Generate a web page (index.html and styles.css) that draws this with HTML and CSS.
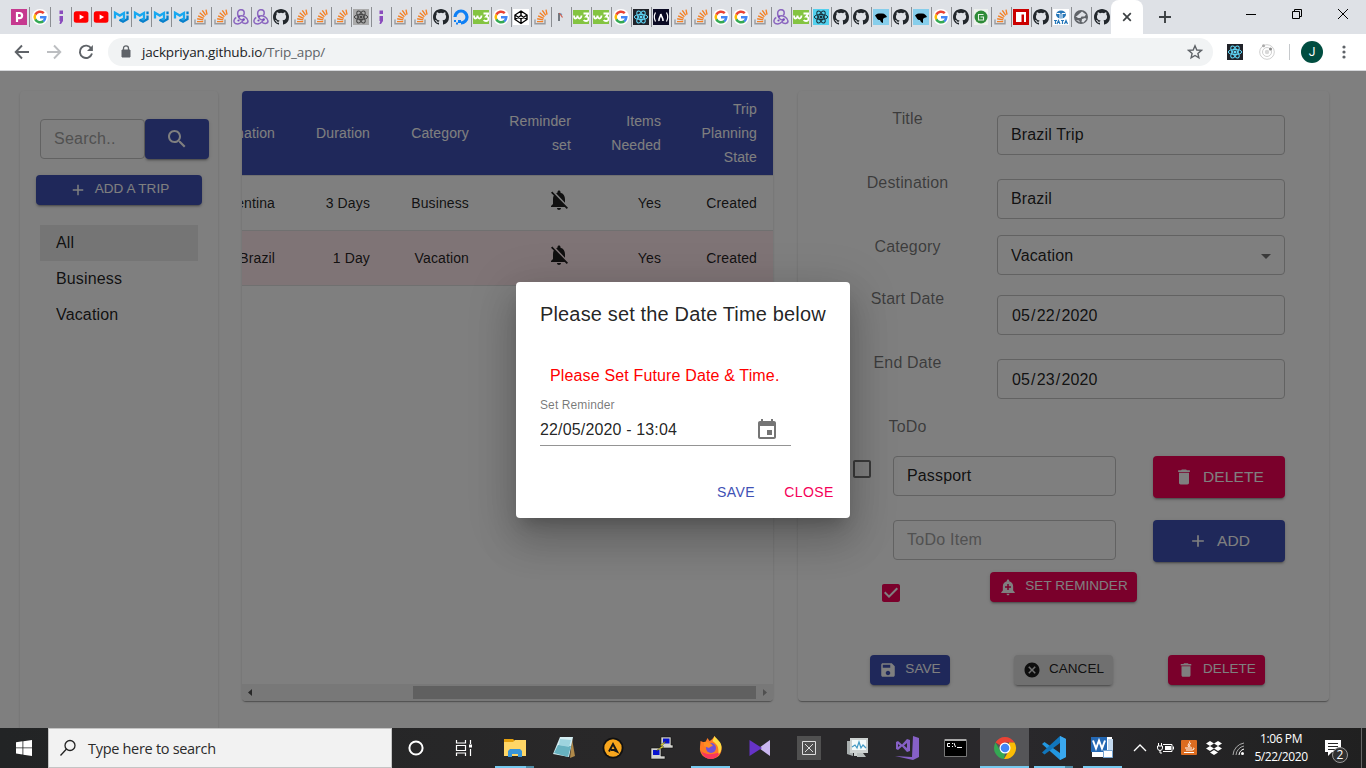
FILE: index.html
```html
<!DOCTYPE html>
<html lang="en">
<head>
<meta charset="utf-8">
<title>Trip App</title>
<link rel="stylesheet" href="styles.css">
</head>
<body>
<svg class="defs" aria-hidden="true">
  <symbol id="pp" viewBox="0 0 16 16"><path fill="#c6398f" d="M0 0h16v16H0z"/><path fill="none" stroke="#fff" stroke-width="2.200" d="M6 13V4h2.500a2.400 2.400 0 0 1 0 5.200H6"/></symbol>
  <symbol id="goo" viewBox="0 0 16 16"><circle cx="8" cy="8" r="8" fill="#fff"/><g fill="none" stroke-width="2.500"><path stroke="#ea4335" d="M3.300 5.600A5.300 5.300 0 0 1 11.800 4.200"/><path stroke="#fbbc05" d="M3.300 5.500a5.300 5.300 0 0 0 0 5"/><path stroke="#34a853" d="M3.300 10.400a5.300 5.300 0 0 0 8.200 1.600"/><path stroke="#4285f4" d="M8 8.200h5.300a5.300 5.300 0 0 1-2 4"/></g></symbol>
  <symbol id="semi" viewBox="0 0 16 16"><path fill="#8a4bbd" d="M6.500 1.500h3.500v3.500H6.500zM6.500 7h3.500v5l-2 3H6.500l.7-3h-.7z"/></symbol>
  <symbol id="yt" viewBox="0 0 16 16"><rect x=".8" y="2.200" width="14.600" height="11.600" rx="2.500" fill="red"/><path fill="#fff" d="M6.600 5.500l4.500 2.500-4.500 2.500z"/></symbol>
  <symbol id="mui" viewBox="0 0 16 16"><path fill="none" stroke="#18a8f0" stroke-width="2.300" d="M2 9.500V3.800l4.800 2.800L11 4v5.500L7 11.500"/><path fill="none" stroke="#0780cc" stroke-width="2.300" d="M6.500 10.700l3.500 2 4.500-2.700V6.500M14.500 2.500v2.700"/></symbol>
  <symbol id="so" viewBox="0 0 16 16"><path fill="none" stroke="#9a9c9f" stroke-width="1.400" d="M2 10.500v4.300h10v-4.300"/><path stroke="#f48024" stroke-width="1.400" d="M4 12.600h6.200M4.200 9.700l6.100 1.200M5.100 6.800l5.600 2.500M6.700 3.800l4.700 3.900M9.300 1.400l3.500 5M13 .6l1 5"/></symbol>
  <symbol id="redux" viewBox="0 0 16 16"><g fill="none" stroke="#8b66bf" stroke-width="1.500"><path d="M10.500 10.800C6 12 4.500 6 4.700 4a3.200 3.200 0 0 1 6.500-.2c.1 1-.4 2-1 2.600"/><path d="M6 7.200C10 5.500 14.800 9 15 12c.1 3-4.300 3-5.900 1.200"/><path d="M10.600 10.500C9 14.500 5 15.500 2.500 14.500c-2.700-1.200-1.500-5 .8-6"/></g><g fill="#764abc"><circle cx="10.700" cy="10.500" r="1.200"/><circle cx="6" cy="7.500" r="1.100"/><circle cx="5.500" cy="11.500" r="1.100"/></g></symbol>
  <symbol id="gh" viewBox="0 0 16 16"><path fill="#22272c" d="M8 0C3.580 0 0 3.580 0 8c0 3.540 2.290 6.530 5.470 7.590.4.070.55-.17.55-.38 0-.19-.01-.82-.01-1.490-2.010.37-2.530-.49-2.690-.94-.09-.23-.48-.94-.82-1.130-.28-.15-.68-.52-.01-.53.63-.01 1.080.58 1.230.82.72 1.210 1.870.87 2.330.66.07-.52.28-.87.51-1.070-1.780-.2-3.640-.89-3.640-3.950 0-.87.31-1.590.82-2.150-.08-.2-.36-1.020.08-2.120 0 0 .67-.21 2.200.82a7.600 7.600 0 0 1 4 0c1.530-1.040 2.200-.82 2.200-.82.44 1.100.16 1.920.08 2.120.51.56.82 1.270.82 2.150 0 3.070-1.870 3.750-3.650 3.950.29.25.54.73.54 1.480 0 1.070-.01 1.930-.01 2.200 0 .21.15.46.55.38A8 8 0 0 0 16 8c0-4.420-3.580-8-8-8z"/></symbol>
  <symbol id="react" viewBox="0 0 16 16"><g fill="none" stroke="currentColor"><ellipse cx="8" cy="8" rx="6.700" ry="2.600"/><ellipse cx="8" cy="8" rx="6.700" ry="2.600" transform="rotate(60 8 8)"/><ellipse cx="8" cy="8" rx="6.700" ry="2.600" transform="rotate(120 8 8)"/></g><circle cx="8" cy="8" r="1.500" fill="currentColor"/></symbol>
  <symbol id="ocean" viewBox="0 0 16 16"><path fill="none" stroke="#0f80f5" stroke-width="3.200" d="M2 8a6 6 0 1 1 6 6"/><path fill="#0f80f5" d="M5 11h3v3H5zM3 13.500h2v2H3zM1 11h2v2H1z"/></symbol>
  <symbol id="w3" viewBox="0 0 16 16"><path fill="#84c441" d="M0 1h16v14H0z"/><path fill="none" stroke="#fff" stroke-width="1.800" d="M1 6.500c0 4 3 4 3.500 0 .500 4 3.500 4 4 0M10.500 4.500h5L13 7.500c3 0 3.500 4.500 0 4.500-1.300 0-2-.5-2.300-1"/></symbol>
  <symbol id="pen" viewBox="0 0 16 16"><path fill="#fff" d="M0 0h16v16H0z"/><path fill="none" stroke="#000" stroke-width="1.400" d="M8 2l6 4v4.500L8 14.500 2 10.500V6zM8 2v4.500M8 10v4.500M2 6l6 4 6-4M2 10.500l6-4 6 4"/></symbol>
  <symbol id="n" viewBox="0 0 16 16"><path stroke="#39424b" stroke-width="1.300" d="M6 4v8"/><path stroke="#d05a4a" stroke-width="1.200" d="M6.500 4l3 4.500"/><path stroke="#6a93b8" d="M7.500 4l1.500 2"/></symbol>
  <symbol id="fcc" viewBox="0 0 16 16"><path fill="#0a0a23" d="M0 0h16v16H0z"/><path fill="none" stroke="#fff" stroke-width="1.200" d="M2.500 3.500c-1.600 3-1.600 6 0 9M13.500 3.500c1.600 3 1.600 6 0 9"/><path fill="none" stroke="#fff" stroke-width="1.600" d="M6 12c-.5-3 1.500-3.500 1.800-7 .7 3.500 2.500 3.500 2.200 7"/></symbol>
  <symbol id="bird" viewBox="0 0 16 16"><path fill="#87ceeb" d="M0 0h16v16H0z"/><path fill="#000" d="M2 6.500C4 4 7 4.500 9 4.500c3 0 4 2 5 3.500-2 .5-3 1-4 2v4c-2-.5-2.700-2-3-3-3 0-3-2-5-4.500z"/></symbol>
  <symbol id="green" viewBox="0 0 16 16"><path fill="#eef2ee" d="M1 0h14v16H1z"/><circle cx="8" cy="8" r="6.500" fill="#2e8b38"/><path fill="none" stroke="#e5f3e5" stroke-width="1.100" d="M10.500 5.500h-5v5.500h5V8H7.500"/></symbol>
  <symbol id="npm" viewBox="0 0 16 16"><path fill="#cb0000" d="M0 0h16v16H0z"/><path fill="#fff" d="M3 3h10v10h-2V5.500H8.500V13H3z"/></symbol>
  <symbol id="tata" viewBox="0 0 16 16"><path fill="#fff" d="M0 0h16v16H0z"/><ellipse cx="8" cy="5.500" rx="5" ry="4" fill="#2677b9"/><path fill="none" stroke="#fff" d="M3.500 4.500h3.500v5M12.500 4.500H9v5"/><path fill="none" stroke="#2677b9" stroke-width="1.200" d="M1 11.500h3M2.500 11v4M4 15l1.500-3.500L7 15M8 11.500h3M9.500 11v4M11.500 15l1.500-3.500 1.500 3.500"/></symbol>
  <symbol id="globe" viewBox="0 0 16 16"><circle cx="8" cy="8" r="7" fill="#5f6368"/><path fill="#dee1e6" d="M9 2.500l4 3-1.500 2-3 0-1 1.500H5L2.500 7C4 7.500 5 6 6 5zM9 10l3-1 1.500 1-3 3.500-2-.5zM3 11l3 .5 1 2z"/></symbol>
  <symbol id="i-search" viewBox="0 0 24 24"><path fill="currentColor" d="M15.500 14h-.79l-.28-.27C15.410 12.590 16 11.110 16 9.500 16 5.910 13.090 3 9.500 3S3 5.910 3 9.500 5.910 16 9.500 16c1.610 0 3.090-.59 4.230-1.570l.27.28v.79l5 4.990L20.490 19l-4.990-5zm-6 0C7.010 14 5 11.990 5 9.500S7.010 5 9.500 5 14 7.010 14 9.500 11.990 14 9.500 14z"/></symbol>
  <symbol id="i-add" viewBox="0 0 24 24"><path fill="currentColor" d="M19 13h-6v6h-2v-6H5v-2h6V5h2v6h6v2z"/></symbol>
  <symbol id="i-off" viewBox="0 0 24 24"><path fill="currentColor" d="M20 18.690L7.840 6.140 5.270 3.490 4 4.760l2.800 2.800v.01c-.52.99-.8 2.160-.8 3.420v5l-2 2v1h13.730l2 2L21 19.720l-1-1.030zM12 22c1.110 0 2-.89 2-2h-4c0 1.110.89 2 2 2zm6-7.320V11c0-3.080-1.640-5.640-4.500-6.320V4c0-.83-.67-1.500-1.500-1.500s-1.500.67-1.500 1.500v.68c-.15.030-.29.080-.42.120-.1.030-.2.070-.3.110h-.01c-.01 0-.01 0-.02.010-.23.090-.46.200-.68.310 0 0-.01 0-.01.010L18 14.680z"/></symbol>
  <symbol id="i-del" viewBox="0 0 24 24"><path fill="currentColor" d="M6 19c0 1.100.9 2 2 2h8c1.100 0 2-.9 2-2V7H6v12zM19 4h-3.500l-1-1h-5l-1 1H5v2h14V4z"/></symbol>
  <symbol id="i-save" viewBox="0 0 24 24"><path fill="currentColor" d="M17 3H5c-1.110 0-2 .9-2 2v14c0 1.100.89 2 2 2h14c1.100 0 2-.9 2-2V7l-4-4zm-5 16c-1.660 0-3-1.340-3-3s1.340-3 3-3 3 1.340 3 3-1.340 3-3 3zm3-10H5V5h10v4z"/></symbol>
  <symbol id="i-cancel" viewBox="0 0 24 24"><path fill="currentColor" d="M12 2C6.470 2 2 6.470 2 12s4.470 10 10 10 10-4.470 10-10S17.530 2 12 2zm5 13.590L15.590 17 12 13.410 8.410 17 7 15.590 10.590 12 7 8.410 8.410 7 12 10.590 15.590 7 17 8.410 13.410 12 17 15.590z"/></symbol>
  <symbol id="i-alert" viewBox="0 0 24 24"><path fill="currentColor" d="M10.010 21.010c0 1.100.89 1.990 1.990 1.990s1.990-.89 1.990-1.990h-3.980zm8.870-4.190V11c0-3.250-2.250-5.970-5.290-6.690v-.72C13.590 2.710 12.880 2 12 2s-1.590.71-1.590 1.590v.72C7.370 5.030 5.120 7.750 5.120 11v5.820L3 18.940V20h18v-1.060l-2.120-2.120zM16 13.010h-3v3h-2v-3H8V11h3V8h2v3h3v2.010z"/></symbol>
</svg>

<header class="tabs">
  <i class="tab wide"><svg><use href="#pp"/></svg></i><i class="tab wide"><svg><use href="#goo"/></svg></i><i class="tab wide"><svg><use href="#semi"/></svg></i>
  <i class="tab"><svg><use href="#yt"/></svg></i><i class="tab"><svg><use href="#yt"/></svg></i>
  <i class="tab"><svg><use href="#mui"/></svg></i><i class="tab"><svg><use href="#mui"/></svg></i><i class="tab"><svg><use href="#mui"/></svg></i><i class="tab"><svg><use href="#mui"/></svg></i>
  <i class="tab"><svg><use href="#so"/></svg></i><i class="tab"><svg><use href="#so"/></svg></i>
  <i class="tab"><svg><use href="#redux"/></svg></i><i class="tab"><svg><use href="#redux"/></svg></i>
  <i class="tab"><svg><use href="#gh"/></svg></i>
  <i class="tab"><svg><use href="#so"/></svg></i><i class="tab"><svg><use href="#so"/></svg></i><i class="tab"><svg><use href="#so"/></svg></i>
  <i class="tab"><svg class="react-grey"><use href="#react"/></svg></i><i class="tab"><svg><use href="#semi"/></svg></i>
  <i class="tab"><svg><use href="#so"/></svg></i><i class="tab"><svg><use href="#so"/></svg></i>
  <i class="tab"><svg><use href="#gh"/></svg></i><i class="tab"><svg><use href="#ocean"/></svg></i><i class="tab"><svg><use href="#w3"/></svg></i><i class="tab"><svg><use href="#goo"/></svg></i><i class="tab"><svg><use href="#pen"/></svg></i>
  <i class="tab"><svg><use href="#so"/></svg></i><i class="tab"><svg><use href="#n"/></svg></i><i class="tab"><svg><use href="#w3"/></svg></i><i class="tab"><svg><use href="#w3"/></svg></i><i class="tab"><svg><use href="#goo"/></svg></i>
  <i class="tab"><svg class="react-dark"><use href="#react"/></svg></i><i class="tab"><svg><use href="#fcc"/></svg></i>
  <i class="tab"><svg><use href="#so"/></svg></i><i class="tab"><svg><use href="#so"/></svg></i><i class="tab"><svg><use href="#goo"/></svg></i><i class="tab"><svg><use href="#goo"/></svg></i><i class="tab"><svg><use href="#so"/></svg></i>
  <i class="tab"><svg><use href="#redux"/></svg></i><i class="tab"><svg><use href="#w3"/></svg></i><i class="tab"><svg class="react-cyan"><use href="#react"/></svg></i>
  <i class="tab"><svg><use href="#gh"/></svg></i><i class="tab"><svg><use href="#gh"/></svg></i><i class="tab"><svg><use href="#bird"/></svg></i><i class="tab"><svg><use href="#gh"/></svg></i><i class="tab"><svg><use href="#bird"/></svg></i>
  <i class="tab"><svg><use href="#goo"/></svg></i><i class="tab"><svg><use href="#gh"/></svg></i><i class="tab"><svg><use href="#green"/></svg></i><i class="tab"><svg><use href="#so"/></svg></i><i class="tab"><svg><use href="#npm"/></svg></i>
  <i class="tab"><svg><use href="#gh"/></svg></i><i class="tab"><svg><use href="#tata"/></svg></i><i class="tab"><svg><use href="#globe"/></svg></i><i class="tab last"><svg><use href="#gh"/></svg></i>
  <div class="active-tab"><svg width="10" height="10" viewBox="0 0 10 10"><path d="M1.200 1.200l7.600 7.600M8.800 1.200L1.200 8.800" stroke="#3c4043" stroke-width="1.700"/></svg></div>
  <svg class="new-tab" viewBox="0 0 12 12"><path d="M6 0v12M0 6h12" stroke="#3c4043" stroke-width="1.900"/></svg>
  <div class="win">
    <svg viewBox="0 0 10 10"><path d="M0 5.500h10" stroke="#000"/></svg>
    <svg viewBox="0 0 10 10"><path d="M.5 2.500h7v7h-7zM2.500 2.500v-2h7v7h-2" fill="none" stroke="#000"/></svg>
    <svg viewBox="0 0 10 10"><path d="M0 0l10 10M10 0L0 10" stroke="#000"/></svg>
  </div>
</header>

<div class="toolbar">
  <svg class="nav" viewBox="0 0 16 16"><path d="M15 8H2M8 1.500L1.700 8 8 14.500" fill="none" stroke="#5f6368" stroke-width="1.900"/></svg>
  <svg class="nav" viewBox="0 0 16 16"><path d="M1 8h13M8 1.500L14.300 8 8 14.500" fill="none" stroke="#bcbec1" stroke-width="1.900"/></svg>
  <svg class="nav" viewBox="0 0 16 16"><path d="M13.300 4.500A6.200 6.200 0 1 0 14 9.600" fill="none" stroke="#5f6368" stroke-width="1.900"/><path d="M14.900 1v6H9z" fill="#5f6368"/></svg>
  <div class="omnibox">
    <svg width="10" height="13" viewBox="0 0 10 13"><path d="M1 5h8v7H1z" fill="#5f6368" stroke="#5f6368" stroke-linejoin="round"/><path d="M2.500 5V3.300a2.500 2.500 0 0 1 5 0V5" fill="none" stroke="#5f6368" stroke-width="1.300"/></svg>
    <span class="url">jackpriyan.github.io<span>/Trip_app/</span></span>
    <svg width="16" height="16" viewBox="0 0 16 16"><path d="M8 1.800l1.800 4.200 4.600.4-3.500 3 1 4.500L8 11.500l-3.900 2.400 1-4.500-3.500-3 4.600-.4z" fill="none" stroke="#5f6368" stroke-width="1.400"/></svg>
  </div>
  <svg class="ext react-ext"><use href="#react"/></svg>
  <svg class="ext" viewBox="0 0 16 16"><g fill="none" stroke="#cfcfcf"><circle cx="8" cy="8" r="7.300"/><circle cx="8" cy="8" r="4.500"/></g><circle cx="8" cy="8" r="2.200" fill="#d8d8d8"/><circle cx="11.500" cy="5" r="1.500" fill="#8b8b8b"/><circle cx="4.500" cy="1.700" r="1.500" fill="#aaa"/></svg>
  <i class="sep"></i>
  <div class="avatar">J</div>
  <svg class="dots" viewBox="0 0 4 16"><g fill="#5f6368"><circle cx="2" cy="3" r="1.600"/><circle cx="2" cy="8" r="1.600"/><circle cx="2" cy="13" r="1.600"/></g></svg>
</div>

<main class="page">
  <aside class="paper side">
    <div class="search-row"><div class="field search ph">Search..</div><button class="btn blue find"><svg><use href="#i-search"/></svg></button></div>
    <button class="btn blue small add-trip"><svg><use href="#i-add"/></svg><span>ADD A TRIP</span></button>
    <ul class="cats"><li class="on">All</li><li>Business</li><li>Vacation</li></ul>
  </aside>

  <section class="paper trips">
    <div class="row head"><div>Destination</div><div>Duration</div><div>Category</div><div>Reminder<br>set</div><div>Items<br>Needed</div><div>Trip<br>Planning<br>State</div></div>
    <div class="row"><div>Argentina</div><div>3 Days</div><div>Business</div><div><svg><use href="#i-off"/></svg></div><div>Yes</div><div>Created</div></div>
    <div class="row pink"><div>Brazil</div><div>1 Day</div><div>Vacation</div><div><svg><use href="#i-off"/></svg></div><div>Yes</div><div>Created</div></div>
    <div class="hscroll"><svg viewBox="0 0 17 17"><path d="M10 5v7L6 8.500z" fill="#505050"/></svg><i class="thumb"></i><svg viewBox="0 0 17 17"><path d="M7 5v7l4-3.500z" fill="#a0a0a0"/></svg></div>
  </section>

  <section class="paper detail">
    <div class="line"><label>Title</label><div class="field">Brazil Trip</div></div>
    <div class="line"><label>Destination</label><div class="field">Brazil</div></div>
    <div class="line short"><label>Category</label><div class="field select">Vacation<svg viewBox="0 0 24 24"><path d="M7 10l5 5 5-5z" fill="#757575"/></svg></div></div>
    <div class="line"><label>Start Date</label><div class="field date"><span>05</span>/<span>22</span>/<span>2020</span></div></div>
    <div class="line"><label>End Date</label><div class="field date"><span>05</span>/<span>23</span>/<span>2020</span></div></div>
    <div class="line todo-label"><label>ToDo</label></div>
    <div class="todo"><svg class="check" viewBox="0 0 24 24"><path fill="#757575" d="M19 5v14H5V5h14m0-2H5c-1.100 0-2 .9-2 2v14c0 1.100.9 2 2 2h14c1.100 0 2-.9 2-2V5c0-1.100-.9-2-2-2z"/></svg><div class="field">Passport</div><button class="btn red large"><svg><use href="#i-del"/></svg><span>DELETE</span></button></div>
    <div class="todo"><i class="check"></i><div class="field ph">ToDo Item</div><button class="btn blue large"><svg><use href="#i-add"/></svg><span>ADD</span></button></div>
    <div class="remind"><svg class="checked" viewBox="0 0 24 24"><path fill="#f50057" d="M19 3H5c-1.110 0-2 .9-2 2v14c0 1.100.89 2 2 2h14c1.110 0 2-.9 2-2V5c0-1.100-.89-2-2-2zm-9 14l-5-5 1.410-1.410L10 14.170l7.590-7.590L19 8l-9 9z"/></svg><button class="btn red small"><svg><use href="#i-alert"/></svg><span>SET REMINDER</span></button></div>
    <div class="actions"><button class="btn blue small save"><svg><use href="#i-save"/></svg><span>SAVE</span></button><button class="btn grey small cancel"><svg><use href="#i-cancel"/></svg><span>CANCEL</span></button><button class="btn red small delete"><svg><use href="#i-del"/></svg><span>DELETE</span></button></div>
  </section>

  <div class="overlay">
    <div class="dialog">
      <h2>Please set the Date Time below</h2>
      <p class="error">Please Set Future Date &amp; Time.</p>
      <div class="cap">Set Reminder</div>
      <div class="picker"><span>22/05/2020 - 13:04</span><svg viewBox="0 0 24 24"><path fill="#757575" d="M17 12h-5v5h5v-5zM16 1v2H8V1H6v2H5c-1.110 0-1.990.9-1.990 2L3 19c0 1.100.89 2 2 2h14c1.100 0 2-.9 2-2V5c0-1.100-.9-2-2-2h-1V1h-2zm3 18H5V8h14v11z"/></svg></div>
      <div class="dlg-actions"><button class="d-save">SAVE</button><button class="d-close">CLOSE</button></div>
    </div>
  </div>
</main>

<footer class="taskbar">
  <div class="start"><svg width="16" height="16" viewBox="0 0 16 16"><path fill="#fff" d="M0 2.200l6.500-.9v6.200H0zM7.300 1.200L16 0v7.500H7.300zM0 8.300h6.500v6.200L0 13.600zM7.300 8.300H16V16l-8.700-1.300z"/></svg></div>
  <div class="winsearch"><svg width="18" height="18" viewBox="0 0 18 18"><circle cx="11" cy="6.500" r="5" fill="none" stroke="#222" stroke-width="1.300"/><path d="M7.500 10L1.500 16.500" stroke="#222" stroke-width="1.300"/></svg><span>Type here to search</span></div>
  <div class="cell"><svg viewBox="0 0 24 24"><circle cx="12" cy="12" r="6.600" fill="none" stroke="#fff" stroke-width="2"/></svg></div>
  <div class="cell"><svg viewBox="0 0 24 24"><path d="M4.500 4v3h9V4M4.500 20v-3h9v3M4.500 9.500h9v5h-9zM18.500 4v4M18.500 13v7" fill="none" stroke="#fff" stroke-width="1.200"/><path fill="#fff" d="M17 8.500h3v3h-3z"/></svg></div>
  <div class="apps">
    <div class="app run more"><svg viewBox="0 0 24 24"><path fill="#e5a00d" d="M1 3h9l2 2v4H1z"/><path fill="#ffd666" d="M1 6h9l2-2h11v16H1z"/><path fill="#3995d8" d="M5 21v-6l2-2h10l2 2v6h-4v-3H9v3z"/></svg></div>
    <div class="app"><svg viewBox="0 0 24 24"><path fill="#b08a4a" d="M20 3l3 17-5 2z"/><path fill="#d5eef3" d="M8 1h13l-4 20-16-3z"/><path fill="#67b2c0" d="M6 9l13 1-3 11-14-4z"/><path fill="#9dd4de" d="M8 3l11 1-2 7-10-2z"/></svg></div>
    <div class="app"><svg viewBox="0 0 24 24"><circle cx="12" cy="12" r="10.500" fill="#111"/><circle cx="12" cy="12" r="8.700" fill="#f8a61d"/><path d="M8 15.500L12 8l4 7.500-3-1.500h-3" fill="none" stroke="#181818" stroke-width="2"/></svg></div>
    <div class="app"><svg viewBox="0 0 24 24"><path fill="#d3d3ce" stroke="#111" stroke-width=".6" d="M11 1h10v8h2v3H12l-1-3zM1 12h10v8h4v3H1z"/><path fill="#0712cf" d="M13 2.500h6.500v5H13zM3 14h6.500v5H3z"/><path fill="#ffee20" stroke="#333" stroke-width=".5" d="M16 5l-6 4 2 1-6 5 8-4-2-1z"/></svg></div>
    <div class="app run"><svg viewBox="0 0 24 24"><path fill="#ff7a24" d="M1.500 5c2 1 3 1 5 1l2-4 2 3c2-1 3-2 5-5 1 3 6 6 7 11 1 7-4 12-10.500 12S0 18 1 11z"/><path fill="#f9375f" d="M2 15c4 4 12 4 19 1-2 5-6 7-9 7-5 0-8-3-10-8z"/><path fill="#fedb43" d="M15.500 0c2 3 7 6 7 11 0 3-1 6-3 7 0-6 0-9-6-13z"/><circle cx="12" cy="12" r="5" fill="#7151d8"/><path fill="#ff8d22" d="M5 6c5-1 7 2 9 4-2 0-3 1-4 2L5 10z"/></svg></div>
    <div class="app"><svg viewBox="0 0 24 24"><path fill="#cab7f1" d="M22 4L11 12l11 8z"/><path fill="#6633c8" d="M1.500 4L14 12 1.500 20z"/></svg></div>
    <div class="app"><svg viewBox="0 0 24 24"><path fill="#505050" d="M0 0h24v24H0z"/><path fill="none" stroke="#ddd" d="M5.500 5.500h13v13h-13zM8 8l8 8M16 8l-8 8"/></svg></div>
    <div class="app"><svg viewBox="0 0 24 24"><path fill="#a9afaf" d="M1 5h4v11h2v4l-6-2z"/><path fill="#cdd2d1" d="M4 2h18v15h-5v3H8v-3H4z"/><path fill="#b8bebd" d="M11 17h6l3 4h-9z"/><path fill="#f4fafa" d="M6 4h14v10H6z"/><path fill="none" stroke="#4199c4" stroke-width="1.200" d="M6 11l3-2 2 3 2-6 2 6 2-3 3 3"/></svg></div>
    <div class="app"><svg viewBox="0 0 24 24"><path fill="#8660c6" fill-rule="evenodd" d="M18 0l6 2v19l-6 3L0 20l17 1zM1 6l2-1 4 3.500L12 3l3 1v11l-3 1-5-5.500L3 14l-2-1zM3 8v3l2-1.500zM12 7l-3 2.500 3 2.500z"/></svg></div>
    <div class="app"><svg viewBox="0 0 24 24"><path fill="#000" stroke="#777" d="M.5 3.500h22v17H.5z"/><path fill="#aaa" d="M1 3h21v2H1z"/><path fill="none" stroke="#fff" d="M6 7.500H3.500v3H6M8.500 7v1M8.500 10v1M10 7l1.500 4M13 11.500h5"/></svg></div>
    <div class="app run hot"><svg viewBox="0 0 24 24"><path fill="#ea4335" d="M12 12L2.500 6.500A11 11 0 0 1 21.500 6.500H12z"/><path fill="#34a853" d="M2.500 6.500L7.200 14.700 12 17.500 11 23A11 11 0 0 1 2.500 6.500z"/><path fill="#fbbc05" d="M21.500 6.500A11 11 0 0 1 11 23l5-8.500 0-8z"/><circle cx="12" cy="12" r="5.500" fill="#fff"/><circle cx="12" cy="12" r="4.300" fill="#4285f4"/></svg></div>
    <div class="app run more"><svg viewBox="0 0 24 24"><path fill="#2297e0" d="M18 0l6 3v18l-6 3L0 8l2.500-2L18 17z"/><path fill="#1176bc" d="M18 0v7L2.500 18.500 0 16.500z"/><path fill="#3aa8ef" d="M18 0l6 3v18l-6 3z"/></svg></div>
    <div class="app run"><svg viewBox="0 0 24 24"><path fill="#fff" d="M1 1h20v20H1z"/><path fill="#2468b3" d="M0 1h16v15H0z"/><path fill="none" stroke="#fff" stroke-width="2" d="M2 4.500l3 8 3-8 3 8 3-8"/><path fill="#c3d9ef" d="M17 3h5v14h-9v-2h4z"/><path fill="#fff" stroke="#78a6d3" d="M12.500 14.500h9v7h-9z"/></svg></div>
  </div>
  <div class="tray">
    <svg viewBox="0 0 24 24"><path d="M6 15l6-6 6 6" fill="none" stroke="#fff" stroke-width="1.300"/></svg>
    <svg viewBox="0 0 24 24"><path d="M10 8.500h9v7h-9M20.500 10.500v3M4.500 10h5v2a2 2 0 0 1-5 0zM5.500 10V7M8.500 10V7M7 14v3h2" fill="none" stroke="#fff"/><path fill="#fff" d="M12 10h6v4h-6z"/></svg>
    <svg viewBox="0 0 24 24"><rect x="4" y="4" width="16" height="15" rx="1" fill="#dc6c20"/><path d="M12 6c3-1-3 3 0 5M14 7c-1 1-2 2-1 4M8 12h7M9 14h6M7 16.500h10M16 12c2 0 1 2-1 2" fill="none" stroke="#fff"/></svg>
    <svg viewBox="0 0 24 24"><path fill="#fff" d="M8 5l4 2.500L8 10 4 7.500zM16 5l4 2.500-4 2.500-4-2.500zM8 10l4 2.500L8 15l-4-2.500zM16 10l4 2.500-4 2.500-4-2.500zM12 14l4 2.500-4 2.500-4-2.500z"/></svg>
    <svg viewBox="0 0 24 24"><g fill="none" stroke="#aaa"><path d="M7 19A13 13 0 0 1 18 7"/><path d="M10 19a10 10 0 0 1 8-9"/></g><path d="M13 19a7 7 0 0 1 5-6" fill="none" stroke="#fff"/><circle cx="16.500" cy="17.500" r="1.500" fill="#fff"/></svg>
  </div>
  <div class="clock">1:06 PM<br>5/22/2020</div>
  <div class="notice"><svg width="18" height="18" viewBox="0 0 18 18"><path fill="#fff" d="M1 1h16v12H8l-4 4v-4H1z"/><path stroke="#262626" d="M4 4.500h10M4 7.500h10M4 10.500h7"/></svg><b>2</b></div>
  <i class="peek"></i>
</footer>
</body>
</html>
```
FILE: styles.css
```css
* { box-sizing: border-box; }
body { margin: 0; width: 1366px; height: 768px; overflow: hidden; display: flex; flex-direction: column; font-family: "Liberation Sans", Arial, sans-serif; background: #fff; }
svg { display: block; flex: none; }
.defs { position: absolute; width: 0; height: 0; }
button { border: 0; margin: 0; font: inherit; }

/* Browser chrome */
.tabs { height: 34px; flex: none; display: flex; background: #dee1e6; padding-left: 8.600px; }
.tab { width: 20px; height: 20px; margin-top: 7px; flex: none; border-right: 1px solid #8b8e92; display: flex; align-items: center; justify-content: center; }
.tab.wide { width: 21px; }
.tab.last { border: 0; }
.tab svg { width: 16px; height: 16px; }
.react-grey { background: #aaa; color: #444; }
.react-dark, .react-ext { background: #20232a; color: #61dafb; }
.react-cyan { background: #53d0ee; color: #17303a; }
.active-tab { width: 32px; height: 34px; margin-left: -0.600px; flex: none; background: #fff; border-radius: 8px 8px 0 0; display: flex; align-items: center; justify-content: center; }
.new-tab { width: 12px; height: 12px; margin: 11px 0 0 16px; }
.win { margin-left: auto; display: flex; gap: 36px; padding: 9px 18px 0 0; }
.win svg { width: 10px; height: 10px; }
.toolbar { height: 37px; flex: none; display: flex; align-items: center; padding: 0 20px 1px 14px; background: #fff; border-bottom: 1px solid #d5d7da; }
.nav { width: 16px; height: 16px; margin-right: 16px; }
.omnibox { width: 1105px; height: 28px; margin-left: -2px; flex: none; border-radius: 14px; background: #f1f3f4; display: flex; align-items: center; padding: 0 10px 0 13px; }
.url { flex: 1; margin-left: 11px; font: 13.500px "Open Sans", sans-serif; letter-spacing: -0.150px; color: #202124; }
.url span { color: #5f6368; }
.ext { width: 16px; height: 16px; margin-left: 14px; }
.ext + .ext { margin-left: 16px; }
.sep { width: 1px; height: 16px; margin: 0 11px 0 14px; background: #c6c9cc; }
.avatar { width: 22px; height: 22px; border-radius: 50%; background: #004d40; color: #fff; font: 12px/22px Roboto, sans-serif; text-align: center; }
.dots { width: 4px; height: 16px; margin-left: auto; }

/* Page */
.page { position: relative; height: 657px; flex: none; overflow: hidden; display: flex; align-items: flex-start; padding: 20px 0 0 20px; }
.paper { background: #fff; border-radius: 4px; flex: none; box-shadow: 0 2px 1px -1px rgba(0,0,0,.2), 0 1px 1px rgba(0,0,0,.14), 0 1px 3px rgba(0,0,0,.12); }
.side { width: 198px; height: 700px; padding: 28px 0 0 16px; }
.search-row { display: flex; padding-left: 4px; }
.field { height: 40px; border: 1px solid #c4c4c4; border-radius: 4px; padding: 0 13px; line-height: 38px; font-size: 16px; color: rgba(0,0,0,.87); white-space: nowrap; letter-spacing: .15px; }
.field.ph { color: #a2a2a2; letter-spacing: .25px; }
.search { width: 105px; }
.btn { display: flex; align-items: center; justify-content: center; border-radius: 4px; white-space: nowrap; padding: 0; box-shadow: 0 3px 1px -2px rgba(0,0,0,.2), 0 2px 2px rgba(0,0,0,.14), 0 1px 5px rgba(0,0,0,.12); }
.blue { background: #3f51b5; color: #fff; }
.red { background: #f50057; color: #fff; }
.grey { background: #e0e0e0; color: rgba(0,0,0,.87); }
.find { width: 64px; height: 40px; }
.find svg { width: 24px; height: 24px; }
.small { height: 30px; font-size: 13.500px; line-height: 24px; letter-spacing: .06px; }
.small span { padding-bottom: 2px; }
.small svg { width: 18px; height: 18px; margin-right: 8px; }
.large { width: 132px; height: 42px; font-size: 15.500px; letter-spacing: .1px; }
.large svg { width: 20px; height: 20px; margin-right: 9px; }
.add-trip { width: 166px; margin-top: 16px; }
.cats { list-style: none; margin: 20px 0 0 4px; padding: 0; width: 158px; }
.cats li { height: 36px; line-height: 35px; padding-left: 16px; font-size: 16px; letter-spacing: .15px; color: rgba(0,0,0,.87); }
.cats .on { background: #ebebeb; }

.trips { width: 531px; height: 610px; margin-left: 24px; display: flex; flex-direction: column; overflow: hidden; }
.row { display: grid; grid-template-columns: 49px 95px 99px 102px 90px 96px; height: 55px; border-bottom: 1px solid #e0e0e0; font-size: 14px; line-height: 24px; letter-spacing: .12px; color: rgba(0,0,0,.87); }
.row div { display: flex; align-items: center; justify-content: flex-end; text-align: right; padding-right: 16px; min-width: 0; white-space: nowrap; }
.row svg { width: 24px; height: 24px; margin-bottom: 6px; }
.head { height: 85px; background: #3f51b5; color: #fff; }
.pink { background: #ffe8ec; }
.hscroll { margin-top: auto; height: 17px; background: #f1f1f1; display: flex; align-items: center; }
.hscroll svg { width: 17px; height: 17px; }
.thumb { width: 343px; height: 13px; margin-left: auto; background: #c1c1c1; }

.detail { width: 531px; height: 610px; margin-left: 25px; padding-top: 16px; }
.line { display: flex; height: 64px; padding-left: 19px; }
.line label { width: 181px; margin-right: -1px; text-align: center; font-size: 16px; line-height: 24px; letter-spacing: .15px; color: rgba(0,0,0,.54); }
.line .field { width: 288px; margin-top: 8px; }
.line.short { height: 52px; }
.line.short .field { margin-top: 0; }
.select { display: flex; align-items: center; justify-content: space-between; padding: 2px 6px 0 13px; line-height: 36px; }
.select svg { width: 24px; height: 24px; margin-top: -1px; }
.date { padding-top: 1px; }
.date span { padding: 0 1px; }
.line.todo-label { height: 41px; }
.todo { display: flex; height: 64px; padding-left: 52px; }
.todo .check { width: 24px; height: 24px; margin-top: 1px; flex: none; }
.todo .field { width: 223px; margin-left: 19px; }
.todo .btn { margin-left: 37px; }
.remind { display: flex; height: 83px; padding-left: 81px; margin-top: -12px; }
.checked { width: 24px; height: 24px; margin-top: 9px; }
.remind .btn { width: 147px; margin-left: 87px; }
.actions { display: flex; padding-left: 72px; }
.save { width: 80px; }
.cancel { width: 99px; margin-left: 64px; }
.delete { width: 97px; margin-left: 55px; }

.overlay { position: absolute; inset: 0; background: rgba(0,0,0,.5); display: flex; align-items: center; justify-content: center; }
.dialog { width: 334px; height: 236px; border-radius: 4px; background: #fff; padding: 16px 8px 8px 24px; color: rgba(0,0,0,.87); box-shadow: 0 11px 15px -7px rgba(0,0,0,.2), 0 24px 38px 3px rgba(0,0,0,.14), 0 9px 46px 8px rgba(0,0,0,.12); display: flex; flex-direction: column; }
.dialog h2 { margin: 0; font-size: 20px; font-weight: 400; line-height: 32px; letter-spacing: .15px; white-space: nowrap; }
.error { margin: 34px 0 0 10px; font-size: 16px; line-height: 24px; letter-spacing: .15px; color: #f00; }
.cap { margin-top: 10px; font-size: 12px; line-height: 14px; letter-spacing: .11px; color: rgba(0,0,0,.54); }
.picker { width: 251px; height: 34px; border-bottom: 1px solid #949494; padding: 3px 12px 0 0; display: flex; align-items: center; justify-content: space-between; font-size: 16px; letter-spacing: .15px; }
.picker svg { width: 24px; height: 24px; }
.dlg-actions { margin-top: auto; display: flex; justify-content: flex-end; gap: 8px; }
.dlg-actions button { height: 36px; background: none; font-size: 14px; letter-spacing: .4px; padding: 0; text-align: center; }
.dlg-actions .d-save { color: #3f51b5; width: 64px; }
.dlg-actions .d-close { color: #f50057; width: 66px; }

/* Taskbar */
.taskbar { height: 40px; flex: none; display: flex; background: linear-gradient(90deg, #222425, #292829 45%, #29282b 75%, #202020); color: #fff; }
.start { width: 48px; display: flex; align-items: center; justify-content: center; }
.winsearch { width: 344px; background: #f2f2f2; border: 1px solid #c4c4c4; display: flex; align-items: center; padding-left: 10px; color: #2b2b2b; font: 14.500px "Open Sans", sans-serif; letter-spacing: -.3px; }
.winsearch span { margin-left: 11px; }
.cell { width: 48px; display: flex; align-items: center; justify-content: center; }
.cell svg, .app svg { width: 24px; height: 24px; }
.apps { display: flex; margin-left: 2px; }
.app { width: 49px; display: flex; align-items: center; justify-content: center; background: no-repeat 5px 38px / 39px 2px; }
.run { background-image: linear-gradient(#76c9ef, #76c9ef); }
.more { background-image: linear-gradient(90deg, #76c9ef 31px, #4e8ba5 31px); }
.hot { background-color: #555558; background-position: 0 38px; background-size: 49px 2px; }
.tray { width: 122px; margin-left: 1px; display: flex; justify-content: space-between; align-items: center; }
.tray svg { width: 24px; height: 24px; }
.clock { width: 62px; margin-top: 2px; font: 12px/18px "Open Sans", sans-serif; letter-spacing: -.4px; text-align: center; white-space: nowrap; }
.notice { position: relative; width: 36px; padding: 11px 0 0 12px; }
.notice b { position: absolute; left: 20px; top: 19px; width: 16px; height: 16px; border-radius: 50%; border: 1px solid #999; background: #303030; font: 12px/14px "Open Sans", sans-serif; text-align: center; }
.peek { margin-left: auto; width: 5px; border-left: 1px solid #666; }
```
